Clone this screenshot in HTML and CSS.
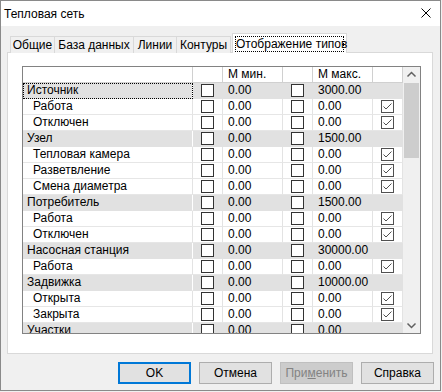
FILE: index.html
```html
<!DOCTYPE html>
<html lang="ru">
<head>
<meta charset="utf-8">
<title>Тепловая сеть</title>
<link rel="stylesheet" href="styles.css">
</head>
<body>
<div class="window">
  <div class="titlebar">
    <span class="title">Тепловая сеть</span>
    <svg class="close" width="10" height="10" viewBox="0 0 10 10"><path d="M0.5 0.5 L9.5 9.5 M9.5 0.5 L0.5 9.5" stroke="#000" stroke-width="1" fill="none"/></svg>
  </div>
  <div class="content">
    <div class="tabs">
      <div class="tab t1">Общие</div>
      <div class="tab t2">База данных</div>
      <div class="tab t3">Линии</div>
      <div class="tab t4">Контуры</div>
      <div class="tab selected"><span class="focus">Отображение типов</span></div>
    </div>
    <div class="panel">
      <div class="grid">
        <div class="table">
          <div class="row head">
            <div class="c name"></div>
            <div class="c chk"></div>
            <div class="c num">М мин.</div>
            <div class="c chk"></div>
            <div class="c num">М макс.</div>
            <div class="c chk"></div>
          </div>
          <div class="rows">
            <div class="row group">
              <div class="c name focused">Источник</div>
              <div class="c chk"><span class="box"></span></div>
              <div class="c num">0.00</div>
              <div class="c chk"><span class="box"></span></div>
              <div class="c num">3000.00</div>
              <div class="c chk"></div>
            </div>
            <div class="row">
              <div class="c name sub">Работа</div>
              <div class="c chk"><span class="box"></span></div>
              <div class="c num">0.00</div>
              <div class="c chk"><span class="box"></span></div>
              <div class="c num">0.00</div>
              <div class="c chk"><span class="box on"><svg width="11" height="11" viewBox="0 0 11 11"><path d="M1.5 5.5 L4 8 L9.5 2.5" stroke="#505050" stroke-width="1" fill="none"/></svg></span></div>
            </div>
            <div class="row">
              <div class="c name sub">Отключен</div>
              <div class="c chk"><span class="box"></span></div>
              <div class="c num">0.00</div>
              <div class="c chk"><span class="box"></span></div>
              <div class="c num">0.00</div>
              <div class="c chk"><span class="box on"><svg width="11" height="11" viewBox="0 0 11 11"><path d="M1.5 5.5 L4 8 L9.5 2.5" stroke="#505050" stroke-width="1" fill="none"/></svg></span></div>
            </div>
            <div class="row group">
              <div class="c name">Узел</div>
              <div class="c chk"><span class="box"></span></div>
              <div class="c num">0.00</div>
              <div class="c chk"><span class="box"></span></div>
              <div class="c num">1500.00</div>
              <div class="c chk"></div>
            </div>
            <div class="row">
              <div class="c name sub">Тепловая камера</div>
              <div class="c chk"><span class="box"></span></div>
              <div class="c num">0.00</div>
              <div class="c chk"><span class="box"></span></div>
              <div class="c num">0.00</div>
              <div class="c chk"><span class="box on"><svg width="11" height="11" viewBox="0 0 11 11"><path d="M1.5 5.5 L4 8 L9.5 2.5" stroke="#505050" stroke-width="1" fill="none"/></svg></span></div>
            </div>
            <div class="row">
              <div class="c name sub">Разветвление</div>
              <div class="c chk"><span class="box"></span></div>
              <div class="c num">0.00</div>
              <div class="c chk"><span class="box"></span></div>
              <div class="c num">0.00</div>
              <div class="c chk"><span class="box on"><svg width="11" height="11" viewBox="0 0 11 11"><path d="M1.5 5.5 L4 8 L9.5 2.5" stroke="#505050" stroke-width="1" fill="none"/></svg></span></div>
            </div>
            <div class="row">
              <div class="c name sub">Смена диаметра</div>
              <div class="c chk"><span class="box"></span></div>
              <div class="c num">0.00</div>
              <div class="c chk"><span class="box"></span></div>
              <div class="c num">0.00</div>
              <div class="c chk"><span class="box on"><svg width="11" height="11" viewBox="0 0 11 11"><path d="M1.5 5.5 L4 8 L9.5 2.5" stroke="#505050" stroke-width="1" fill="none"/></svg></span></div>
            </div>
            <div class="row group">
              <div class="c name">Потребитель</div>
              <div class="c chk"><span class="box"></span></div>
              <div class="c num">0.00</div>
              <div class="c chk"><span class="box"></span></div>
              <div class="c num">1500.00</div>
              <div class="c chk"></div>
            </div>
            <div class="row">
              <div class="c name sub">Работа</div>
              <div class="c chk"><span class="box"></span></div>
              <div class="c num">0.00</div>
              <div class="c chk"><span class="box"></span></div>
              <div class="c num">0.00</div>
              <div class="c chk"><span class="box on"><svg width="11" height="11" viewBox="0 0 11 11"><path d="M1.5 5.5 L4 8 L9.5 2.5" stroke="#505050" stroke-width="1" fill="none"/></svg></span></div>
            </div>
            <div class="row">
              <div class="c name sub">Отключен</div>
              <div class="c chk"><span class="box"></span></div>
              <div class="c num">0.00</div>
              <div class="c chk"><span class="box"></span></div>
              <div class="c num">0.00</div>
              <div class="c chk"><span class="box on"><svg width="11" height="11" viewBox="0 0 11 11"><path d="M1.5 5.5 L4 8 L9.5 2.5" stroke="#505050" stroke-width="1" fill="none"/></svg></span></div>
            </div>
            <div class="row group">
              <div class="c name">Насосная станция</div>
              <div class="c chk"><span class="box"></span></div>
              <div class="c num">0.00</div>
              <div class="c chk"><span class="box"></span></div>
              <div class="c num">30000.00</div>
              <div class="c chk"></div>
            </div>
            <div class="row">
              <div class="c name sub">Работа</div>
              <div class="c chk"><span class="box"></span></div>
              <div class="c num">0.00</div>
              <div class="c chk"><span class="box"></span></div>
              <div class="c num">0.00</div>
              <div class="c chk"><span class="box on"><svg width="11" height="11" viewBox="0 0 11 11"><path d="M1.5 5.5 L4 8 L9.5 2.5" stroke="#505050" stroke-width="1" fill="none"/></svg></span></div>
            </div>
            <div class="row group">
              <div class="c name">Задвижка</div>
              <div class="c chk"><span class="box"></span></div>
              <div class="c num">0.00</div>
              <div class="c chk"><span class="box"></span></div>
              <div class="c num">10000.00</div>
              <div class="c chk"></div>
            </div>
            <div class="row">
              <div class="c name sub">Открыта</div>
              <div class="c chk"><span class="box"></span></div>
              <div class="c num">0.00</div>
              <div class="c chk"><span class="box"></span></div>
              <div class="c num">0.00</div>
              <div class="c chk"><span class="box on"><svg width="11" height="11" viewBox="0 0 11 11"><path d="M1.5 5.5 L4 8 L9.5 2.5" stroke="#505050" stroke-width="1" fill="none"/></svg></span></div>
            </div>
            <div class="row">
              <div class="c name sub">Закрыта</div>
              <div class="c chk"><span class="box"></span></div>
              <div class="c num">0.00</div>
              <div class="c chk"><span class="box"></span></div>
              <div class="c num">0.00</div>
              <div class="c chk"><span class="box on"><svg width="11" height="11" viewBox="0 0 11 11"><path d="M1.5 5.5 L4 8 L9.5 2.5" stroke="#505050" stroke-width="1" fill="none"/></svg></span></div>
            </div>
            <div class="row group">
              <div class="c name">Участки</div>
              <div class="c chk"><span class="box"></span></div>
              <div class="c num">0.00</div>
              <div class="c chk"><span class="box"></span></div>
              <div class="c num">0.00</div>
              <div class="c chk"></div>
            </div>
          </div>
        </div>
        <div class="scrollbar">
          <div class="arrow"><svg width="17" height="16" viewBox="0 0 17 16"><path d="M4.5 9.5 L8.5 5.5 L12.5 9.5" stroke="#606060" stroke-width="1.5" fill="none"/></svg></div>
          <div class="track"><div class="thumb"></div></div>
          <div class="arrow"><svg width="17" height="16" viewBox="0 0 17 16"><path d="M4.5 6.5 L8.5 10.5 L12.5 6.5" stroke="#606060" stroke-width="1.5" fill="none"/></svg></div>
        </div>
      </div>
    </div>
    <div class="buttons">
      <div class="btn default">OK</div>
      <div class="btn">Отмена</div>
      <div class="btn disabled">При<u>м</u>енить</div>
      <div class="btn">Справка</div>
    </div>
  </div>
</div>
</body>
</html>
```

FILE: styles.css
```css
* { box-sizing: border-box; }
html, body { margin: 0; padding: 0; }
body {
  background: #f0f0f0;
  font-family: "Liberation Sans", "Noto Sans", sans-serif;
  font-size: 12px;
  color: #000;
}
.window {
  width: 441px;
  height: 391px;
  border: 1px solid #8a8a8a;
  background: #f0f0f0;
  display: flex;
  flex-direction: column;
}
.titlebar {
  height: 25px;
  background: #fff;
  display: flex;
  align-items: center;
  justify-content: space-between;
  padding: 1px 9px 0 3px;
  flex-shrink: 0;
}
.title { font-size: 12px; }
.close { display: block; margin-top: -2px; }
.content {
  padding: 7px 0 0 6px;
  display: flex;
  flex-direction: column;
}
.tabs {
  display: flex;
  align-items: flex-end;
  height: 20px;
  padding-left: 3px;
  margin-bottom: -1px;
  position: relative;
  z-index: 1;
}
.tab {
  height: 17px;
  border: 1px solid #d9d9d9;
  border-bottom: none;
  background: #f0f0f0;
  line-height: 16px;
  text-align: center;
  white-space: nowrap;
}
.t1 { width: 45px; }
.t2 { width: 80px; margin-left: -1px; }
.t3 { width: 44px; margin-left: -1px; }
.t4 { width: 55px; margin-left: -1px; }
.tab.selected {
  width: 115px;
  height: 20px;
  margin-left: 1px;
  background: #fff;
  padding: 2px 2px 0;
}
.focus {
  display: block;
  border: 1px dotted #000;
  line-height: 14px;
  height: 16px;
}
.panel {
  width: 426px;
  height: 302px;
  background: #fff;
  border: 1px solid #d9d9d9;
  padding: 13px 0 0 14px;
}
.grid {
  width: 399px;
  height: 268px;
  border: 1px solid #828282;
  display: flex;
}
.table {
  width: 380px;
  display: flex;
  flex-direction: column;
}
.rows {
  height: 250px;
  overflow: hidden;
}
.row {
  display: grid;
  grid-template-columns: 170px 30px 60px 30px 60px 30px;
  height: 16px;
}
.c {
  border-right: 1px solid #e3e3e3;
  border-bottom: 1px solid #e6e6e6;
  line-height: 15px;
  white-space: nowrap;
  overflow: hidden;
}
.head .c {
  border-right-color: #d0d0d0;
  border-bottom-color: #d0d0d0;
}
.group { background: #e1e1e1; }
.group .c { border-bottom-color: #e1e1e1; border-right-color: #e1e1e1; }
.group .c.name { border-right-color: #fff; }
.name { padding-left: 4px; }
.name.sub { padding-left: 10px; }
.name.focused { outline: 1px dotted #000; outline-offset: -1px; }
.num { padding-left: 5px; }
.chk {
  display: flex;
  align-items: center;
  justify-content: center;
}
.box {
  width: 13px;
  height: 13px;
  border: 1px solid #333;
  background: #fff;
  display: flex;
  align-items: center;
  justify-content: center;
}
.box.on { border-color: #505050; }
.box svg { display: block; }
.scrollbar {
  width: 17px;
  display: flex;
  flex-direction: column;
  background: #f0f0f0;
}
.arrow { height: 16px; }
.arrow svg { display: block; }
.track {
  flex: 1;
  padding: 0 1px;
}
.thumb {
  height: 75px;
  background: #cdcdcd;
}
.buttons {
  display: flex;
  gap: 8px;
  padding-left: 111px;
  margin-top: 8px;
}
.btn {
  width: 73px;
  height: 22px;
  border: 1px solid #adadad;
  background: #e1e1e1;
  text-align: center;
  line-height: 20px;
}
.btn.default {
  border: 2px solid #0078d7;
  line-height: 18px;
}
.btn.disabled {
  background: #cccccc;
  border-color: #bfbfbf;
  color: #838383;
}
.btn u { text-decoration: underline; }
```
